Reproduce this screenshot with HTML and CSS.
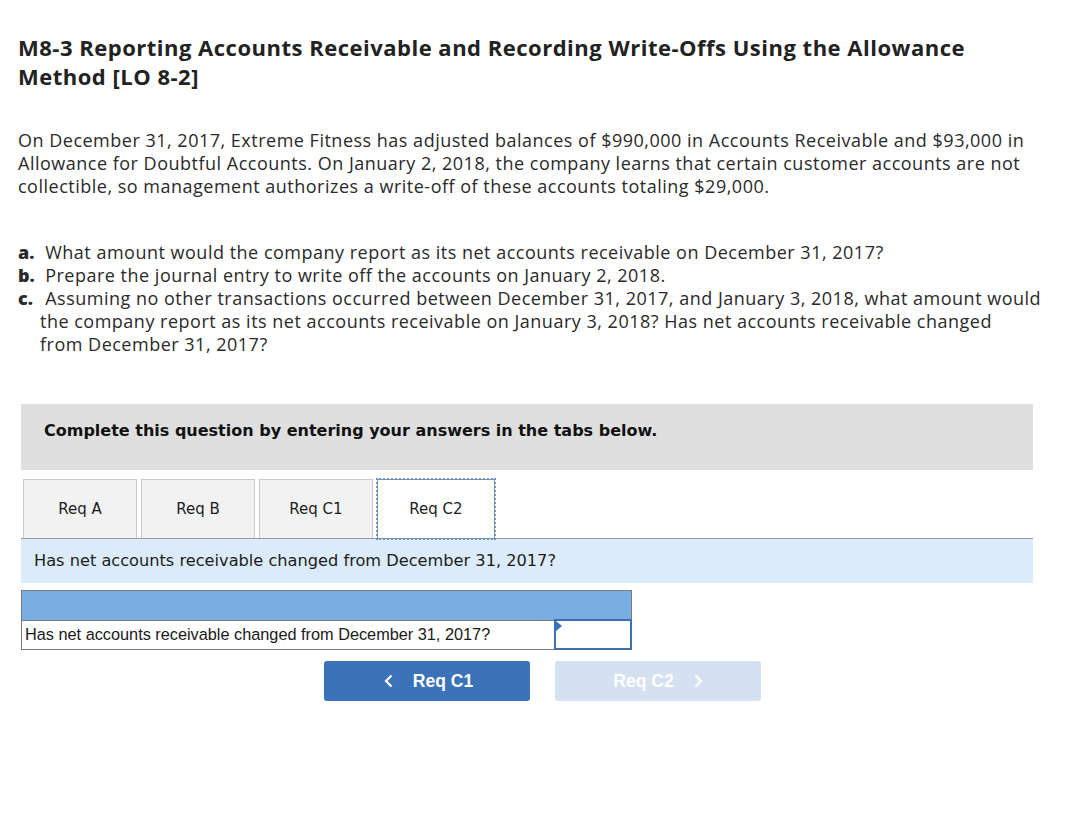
FILE: index.html
```html
<!DOCTYPE html>
<html lang="en">
<head>
<meta charset="utf-8">
<title>M8-3 Reporting Accounts Receivable</title>
<link rel="stylesheet" href="styles.css">
</head>
<body>
<div class="page">
  <h1 class="title">M8-3 Reporting Accounts Receivable and Recording Write-Offs Using the Allowance Method [LO 8-2]</h1>
  <p class="intro">On December 31, 2017, Extreme Fitness has adjusted balances of $990,000 in Accounts Receivable and $93,000 in Allowance for Doubtful Accounts. On January 2, 2018, the company learns that certain customer accounts are not collectible, so management authorizes a write-off of these accounts totaling $29,000.</p>
  <ul class="reqs">
    <li><b class="lbl">a.</b> What amount would the company report as its net accounts receivable on December 31, 2017?</li>
    <li><b class="lbl">b.</b> Prepare the journal entry to write off the accounts on January 2, 2018.</li>
    <li><b class="lbl">c.</b> Assuming no other transactions occurred between December 31, 2017, and January 3, 2018, what amount would the company report as its net accounts receivable on January 3, 2018? Has net accounts receivable changed<br>from December 31, 2017?</li>
  </ul>

  <div class="work">
    <div class="instruct">Complete this question by entering your answers in the tabs below.</div>
    <div class="tabs">
      <div class="tab">Req A</div>
      <div class="tab">Req B</div>
      <div class="tab">Req C1</div>
      <div class="tab active">Req C2</div>
    </div>
    <div class="prompt">Has net accounts receivable changed from December 31, 2017?</div>
    <table class="answer">
      <tr class="head"><th colspan="2"></th></tr>
      <tr>
        <td class="q">Has net accounts receivable changed from December 31, 2017?</td>
        <td class="inp"><span class="flag"></span></td>
      </tr>
    </table>
    <div class="nav">
      <button class="btn prev"><svg class="chev" width="9" height="14" viewBox="0 0 9 14"><polyline points="7.5,1.5 2,7 7.5,12.5" fill="none" stroke="#fff" stroke-width="2.2"/></svg><span>Req C1</span></button>
      <button class="btn next"><span>Req C2</span><svg class="chev" width="9" height="14" viewBox="0 0 9 14"><polyline points="1.5,1.5 7,7 1.5,12.5" fill="none" stroke="#fff" stroke-width="2.2"/></svg></button>
    </div>
  </div>
</div>
</body>
</html>
```
FILE: styles.css
```css
html, body {
  margin: 0;
  padding: 0;
  background: #fff;
}

.page {
  padding: 33px 0 0 18px;
  width: 1028px;
  font-family: "Open Sans", Lato, sans-serif;
  color: #2a2a2a;
}

.title {
  margin: 0;
  font-size: 22px;
  line-height: 29px;
  font-weight: 700;
  letter-spacing: 0.5px;
  color: #222;
}

.intro {
  margin: 38px 0 0 0;
  font-size: 18px;
  line-height: 23px;
  letter-spacing: 0.5px;
}

.reqs {
  list-style: none;
  margin: 43px 0 0 0;
  padding: 0;
  font-size: 18px;
  line-height: 23px;
  letter-spacing: 0.5px;
}

.reqs li {
  padding-left: 22px;
  text-indent: -22px;
}

.reqs .lbl {
  display: inline-block;
  text-indent: 0;
  width: 22px;
  font-weight: 800;
  letter-spacing: 0;
}

.work {
  margin: 48px 0 0 3px;
  width: 1012px;
}

.instruct {
  background: #dfdfdf;
  height: 66px;
  box-sizing: border-box;
  padding: 17px 0 0 23px;
  font-family: "DejaVu Sans", Verdana, sans-serif;
  font-weight: 700;
  font-size: 16px;
  line-height: 20px;
  color: #111;
}

.tabs {
  display: flex;
  gap: 4px;
  margin-top: 9px;
  padding-left: 2px;
  border-bottom: 1px solid #9b9b9b;
  height: 59px;
}

.tab {
  width: 114px;
  box-sizing: border-box;
  height: 59px;
  background: #f2f2f2;
  border: 1px solid #c9c9c9;
  border-bottom: none;
  display: flex;
  align-items: center;
  justify-content: center;
  font-family: "DejaVu Sans", Verdana, sans-serif;
  font-size: 15px;
  color: #1d1d1d;
}

.tab.active {
  width: 118px;
  background: #fff;
  border: 1px solid #8f8f8f;
  outline: 2px dotted #6a95cb;
  outline-offset: -1px;
  height: 60px;
}

.prompt {
  background: #dbebf9;
  height: 44px;
  box-sizing: border-box;
  padding: 12px 0 0 13px;
  font-family: "DejaVu Sans", Verdana, sans-serif;
  font-size: 16.2px;
  line-height: 20px;
  color: #1d1d1d;
}

.answer {
  margin-top: 7px;
  width: 611px;
  border-collapse: collapse;
  border: 1px solid #7a7a7a;
  font-family: "Liberation Sans", Arial, sans-serif;
}

.answer .head th {
  background: #7aaee3;
  height: 28px;
  padding: 0;
}

.answer td {
  height: 27px;
  padding: 0;
  border-top: 1px solid #7a7a7a;
}

.answer .q {
  padding-left: 3px;
  font-size: 16.3px;
  color: #1a1a1a;
}

.answer .inp {
  width: 74px;
  border: 2px solid #3b6fb3;
  position: relative;
}

.flag {
  position: absolute;
  left: 0;
  top: 0;
  width: 0;
  height: 0;
  border-top: 5px solid transparent;
  border-bottom: 5px solid transparent;
  border-left: 6px solid #3a73b8;
}

.nav {
  display: flex;
  gap: 25px;
  margin-top: 11px;
  padding-left: 303px;
}

.btn {
  width: 206px;
  height: 40px;
  border: none;
  border-radius: 3px;
  font-family: "Liberation Sans Narrow", "Liberation Sans", Arial, sans-serif;
  font-weight: 700;
  font-size: 17.5px;
  color: #fff;
  display: flex;
  align-items: center;
  justify-content: center;
  gap: 20px;
  padding: 0;
}

.btn .chev {
  display: block;
}

.prev {
  background: #3b73b9;
}

.prev .chev {
  margin-left: 3px;
}

.next {
  background: #d5e1f0;
}
```
